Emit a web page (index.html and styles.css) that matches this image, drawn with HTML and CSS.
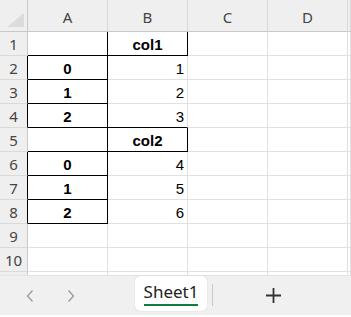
FILE: index.html
```html
<!DOCTYPE html>
<html lang="en">
<head>
  <meta charset="UTF-8" />
  <title>Sheet1</title>
  <link rel="stylesheet" href="styles.css">
</head>
<body>
  <div class="sheet">
    <div class="corner"><span class="tri"></span></div>
    <div class="col">A</div>
    <div class="col">B</div>
    <div class="col">C</div>
    <div class="col">D</div>
    <div class="col"></div>

    <div class="row">1</div>
    <div class="cell kb kr"></div>
    <div class="cell kb kr hd">col1</div>
    <div class="cell"></div><div class="cell"></div><div class="cell"></div>

    <div class="row kr">2</div>
    <div class="cell kb kr idx">0</div>
    <div class="cell num">1</div>
    <div class="cell"></div><div class="cell"></div><div class="cell"></div>

    <div class="row kr">3</div>
    <div class="cell kb kr idx">1</div>
    <div class="cell num">2</div>
    <div class="cell"></div><div class="cell"></div><div class="cell"></div>

    <div class="row kr">4</div>
    <div class="cell kb kr idx">2</div>
    <div class="cell kb num">3</div>
    <div class="cell"></div><div class="cell"></div><div class="cell"></div>

    <div class="row">5</div>
    <div class="cell kb kr"></div>
    <div class="cell kb kr hd">col2</div>
    <div class="cell"></div><div class="cell"></div><div class="cell"></div>

    <div class="row kr">6</div>
    <div class="cell kb kr idx">0</div>
    <div class="cell num">4</div>
    <div class="cell"></div><div class="cell"></div><div class="cell"></div>

    <div class="row kr">7</div>
    <div class="cell kb kr idx">1</div>
    <div class="cell num">5</div>
    <div class="cell"></div><div class="cell"></div><div class="cell"></div>

    <div class="row kr">8</div>
    <div class="cell kb kr idx">2</div>
    <div class="cell num">6</div>
    <div class="cell"></div><div class="cell"></div><div class="cell"></div>

    <div class="row">9</div>
    <div class="cell"></div><div class="cell"></div><div class="cell"></div><div class="cell"></div><div class="cell"></div>

    <div class="row">10</div>
    <div class="cell"></div><div class="cell"></div><div class="cell"></div><div class="cell"></div><div class="cell"></div>

    <div class="row"></div>
    <div class="cell"></div><div class="cell"></div><div class="cell"></div><div class="cell"></div><div class="cell"></div>
  </div>

  <div class="tabbar">
    <div class="nav">
      <svg width="8" height="12" viewBox="0 0 8 12"><path d="M6.5 0.5 L1.5 6 L6.5 11.5" fill="none" stroke="#9a9a9a" stroke-width="1.3"/></svg>
      <svg width="8" height="12" viewBox="0 0 8 12"><path d="M1.5 0.5 L6.5 6 L1.5 11.5" fill="none" stroke="#9a9a9a" stroke-width="1.3"/></svg>
    </div>
    <div class="tab"><span>Sheet1</span></div>
    <div class="sep"></div>
    <div class="add">
      <svg width="15" height="15" viewBox="0 0 15 15"><path d="M7.5 0 V15 M0 7.5 H15" stroke="#333" stroke-width="1.8"/></svg>
    </div>
  </div>
</body>
</html>
```

FILE: styles.css
```css
body {
  margin: 0;
  width: 351px;
  height: 317px;
  overflow: hidden;
  background: #fff;
  font-family: "Liberation Sans", Arial, sans-serif;
}
.sheet {
  height: 275px;
  overflow: hidden;
  display: grid;
  grid-template-columns: 28px repeat(4, 80px) 1fr;
  grid-template-rows: 32px;
  grid-auto-rows: 24px;
}
.sheet > div {
  box-sizing: border-box;
  border-right: 1px solid #e1e1e1;
  border-bottom: 1px solid #e1e1e1;
  display: flex;
  align-items: center;
  font-size: 15px;
  color: #000;
  padding-top: 2px;
}
.corner {
  background: #efefef;
  position: relative;
}
.sheet > .corner {
  border-right: 1px solid #c8c8c8;
  border-bottom: 1px solid #c8c8c8;
}
.tri {
  position: absolute;
  left: 7px;
  top: 13px;
  width: 0;
  height: 0;
  border-left: 17px solid transparent;
  border-bottom: 14px solid #dcdcdc;
}
.sheet > .col {
  background: #efefef;
  border-right: 1px solid #dadada;
  border-bottom: 1px solid #c8c8c8;
  justify-content: center;
  font-family: "Noto Sans", sans-serif;
  font-size: 15px;
  color: #444;
}
.sheet > .row {
  background: #efefef;
  border-right: 1px solid #c8c8c8;
  border-bottom: 1px solid #dadada;
  justify-content: center;
  font-family: "Noto Sans", sans-serif;
  font-size: 15px;
  color: #444;
  padding-top: 0;
}
.sheet > .kb {
  border-bottom-color: #000;
}
.sheet > .kr {
  border-right-color: #000;
}
.num {
  justify-content: flex-end;
  padding-right: 3px;
}
.idx, .hd {
  justify-content: center;
  font-weight: bold;
}
.tabbar {
  height: 40px;
  background: #f0f0f0;
  border-top: 1px solid #e3e3e3;
  box-sizing: border-box;
  display: flex;
  align-items: flex-start;
}
.nav {
  width: 135px;
  height: 39px;
  display: flex;
  align-items: center;
  gap: 33px;
  padding-left: 26px;
  box-sizing: border-box;
}
.nav svg {
  margin-top: 1px;
}
.tab {
  width: 72px;
  height: 35px;
  background: #fff;
  border-radius: 5px;
  box-shadow: 0 0 1px rgba(0, 0, 0, 0.25);
  display: flex;
  justify-content: center;
  align-items: flex-start;
  box-sizing: border-box;
  padding-top: 4px;
}
.tab span {
  font-family: "Noto Sans", sans-serif;
  font-size: 17px;
  color: #222;
  line-height: 23px;
  padding-bottom: 1px;
  border-bottom: 2px solid #107c41;
}
.sep {
  width: 1px;
  height: 22px;
  background: #c8c8c8;
  margin: 8px 0 0 5px;
}
.add {
  width: 120px;
  height: 39px;
  display: flex;
  align-items: center;
  justify-content: center;
  padding-bottom: 1px;
  box-sizing: border-box;
}
```
